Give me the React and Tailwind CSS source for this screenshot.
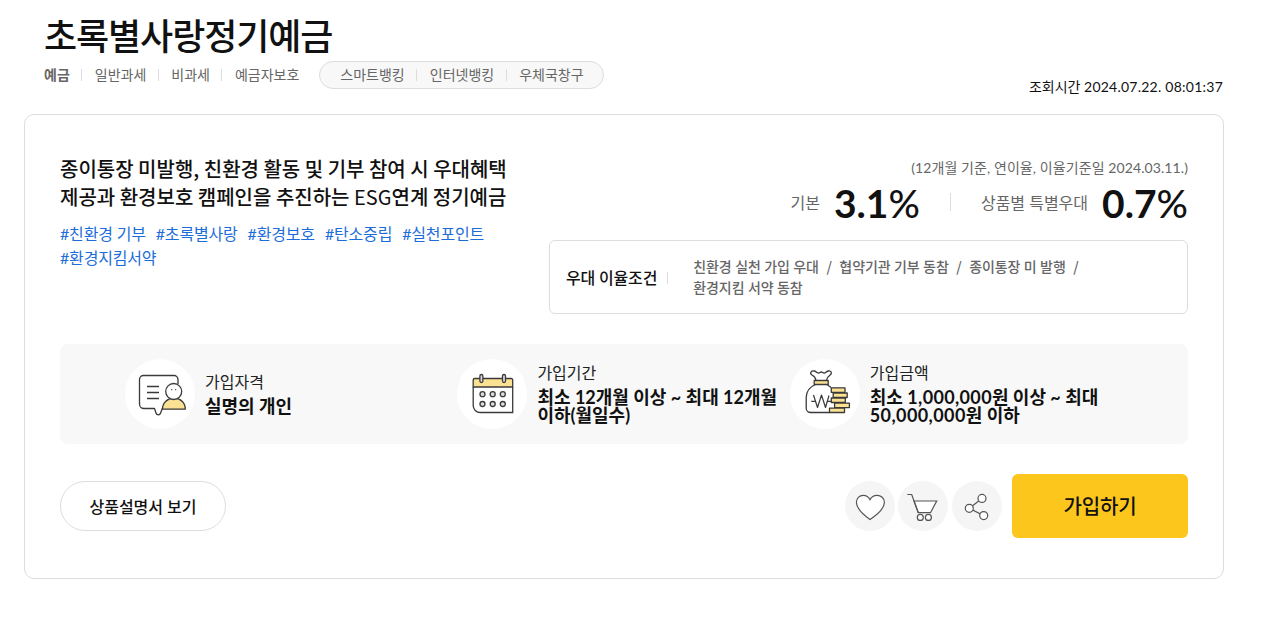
const tags = ['일반과세', '비과세', '예금자보호']
const channels = ['스마트뱅킹', '인터넷뱅킹', '우체국창구']
const hashtags = ['친환경 기부', '초록별사랑', '환경보호', '탄소중립', '실천포인트', '환경지킴서약']

function Bar({ className = 'h-3 ml-[11.5px] mr-[12.5px]' }) {
  return <span className={`w-px shrink-0 bg-[#ddd] ${className}`} />
}

function Slash() {
  return <span className="mx-[7.5px] font-['Noto_Sans_CJK_KR',sans-serif]">/</span>
}

function Rate({ children }) {
  return (
    <strong className="ml-3.5 pb-0.5 text-[39px] leading-[44px] font-bold text-[#111]">
      {children}<span className="font-medium">%</span>
    </strong>
  )
}

function MemberIcon() {
  return (
    <svg className="w-[70px] h-[70px]" viewBox="0 0 70 70" fill="none" stroke="#3a3a3a" strokeWidth={1.3} strokeLinejoin="round">
      <path d="M53 25V20.5a4 4 0 0 0-4-4H18.5a4 4 0 0 0-4 4v24.500a4.500 4.500 0 0 0 4.500 4.500h10.500l1.500 4.500c.8 2.400 3.800 2.400 4.600 0l1.900-5" />
      <path d="M22 27.500h12M22 33.500h12M22 39.500h12" />
      <path d="M37.500 50.200c0-6.500 5-11 11.500-11s11.300 4.500 11.300 11z" fill="#fbe192" />
      <circle cx="48.700" cy="32.500" r="8" fill="#fff" />
      <path d="M46.200 30.700h1M50.200 30.700h1" />
    </svg>
  )
}

function CalendarIcon() {
  return (
    <svg className="w-[70px] h-[70px]" viewBox="0 0 70 70" fill="none" stroke="#3a3a3a" strokeWidth={1.3}>
      <path d="M16.200 28V21a1.500 1.500 0 0 1 1.500-1.500h36.500a1.500 1.500 0 0 1 1.500 1.500v7z" fill="#fbe192" />
      <path d="M16.200 28v18.500a7 7 0 0 0 7 7h32.500V28" />
      <g fill="#ddd">
        <rect x="22.900" y="15.500" width="3" height="8" rx="1.500" />
        <rect x="45.500" y="15.500" width="3" height="8" rx="1.500" />
        <circle cx="25.500" cy="35.200" r="2.500" />
        <circle cx="35.700" cy="35.200" r="2.500" />
        <circle cx="45.800" cy="35.200" r="2.500" />
        <circle cx="25.500" cy="45" r="2.500" />
        <circle cx="35.700" cy="45" r="2.500" />
        <circle cx="45.800" cy="45" r="2.500" />
      </g>
    </svg>
  )
}

function MoneyIcon() {
  return (
    <svg className="w-[70px] h-[70px]" viewBox="0 0 70 70" fill="none" stroke="#3a3a3a" strokeWidth={1.3} strokeLinejoin="round">
      <path d="M26 21.300c-.5-2.800-2-4.300-4-5.300-3-1.800-.5-4.800 2.500-4 2 .5 2.500 2.200 4 2.200 1.200 0 1.600-1.200 2.800-1.200s1.600 1.200 2.800 1.200c1.500 0 2-1.700 4-2.200 3-.8 4.500 2.200 2 4-2 1.500-3.200 2.500-3.700 5.300" />
      <rect x="24.200" y="21.500" width="14" height="4" fill="#fbe192" />
      <path d="M25.500 25.500c-6 2.500-9.300 7-9.300 13v10.500a4.500 4.500 0 0 0 4.500 4.500H39.500M37 25.500l4 3" />
      <path d="M23.500 36l4 12.500 4-12.500 4 12.500 3.500-12M21.300 42.300h4.200M38 42.300h3" strokeWidth={1.200} />
      <g fill="#fbe192">
        <rect x="41.300" y="28.800" width="13.700" height="4.500" />
        <rect x="43.200" y="34" width="14" height="4.500" />
        <rect x="41.300" y="39" width="14" height="4.500" />
        <rect x="44.600" y="44.100" width="14.800" height="4.500" />
        <rect x="39.500" y="49.200" width="15" height="4.300" />
      </g>
    </svg>
  )
}

function InfoItem({ icon, label, children }) {
  return (
    <li className="flex items-center w-[332.4px]">
      <div className="w-[70px] h-[70px] rounded-full bg-white mr-2.5 shrink-0">{icon}</div>
      <div className="whitespace-nowrap pb-1">
        <p className="text-base leading-6 mb-[3px] text-[#222]">{label}</p>
        <p className="text-lg leading-[18px] font-bold">{children}</p>
      </div>
    </li>
  )
}

function RoundButton({ label, children }) {
  return (
    <button aria-label={label} className="w-[50px] h-[50px] rounded-full bg-[#f5f5f5]">
      <svg className="w-[50px] h-[50px]" viewBox="0 0 50 50" fill="#fff" stroke="#555" strokeWidth={1.2}>
        {children}
      </svg>
    </button>
  )
}

export default function App() {
  return (
    <main className="w-[1270px] h-[627px] bg-white text-[#111] overflow-hidden pl-6 font-['Lato','Noto_Sans_CJK_KR',sans-serif]">
      <header className="w-[1200px] h-[114px] pl-5 pr-px flex justify-between">
        <div className="pt-3">
          <h1 className="text-4xl leading-[48px] font-medium tracking-[-0.03em]">초록별사랑정기예금</h1>
          <div className="flex items-center h-7 mt-px text-sm text-[#666]">
            <strong className="font-bold">예금</strong>
            {tags.map((t) => (
              <span key={t} className="flex items-center"><Bar />{t}</span>
            ))}
            <div className="flex items-center h-7 ml-5 pl-5 pr-[19px] border border-[#ddd] rounded-full bg-[#f8f8f8]">
              {channels.map((c, i) => (
                <span key={c} className="flex items-center">{i > 0 && <Bar />}{c}</span>
              ))}
            </div>
          </div>
        </div>
        <p className="text-sm leading-5 pt-[77px]">조회시간 <span className="tracking-[0.24px]">2024.07.22. 08:01:37</span></p>
      </header>

      <section className="w-[1200px] h-[465px] border border-[#ddd] rounded-[10px] px-[35px] pt-[40px]">
        <div className="flex justify-between h-[189px]">
          <div className="whitespace-nowrap">
            <p className="text-xl leading-7 font-medium font-['Noto_Sans_CJK_KR',sans-serif]">
              종이통장 미발행, 친환경 활동 및 기부 참여 시 우대혜택<br />
              제공과 환경보호 캠페인을 추진하는 <span className="font-normal">ESG</span>연계 정기예금
            </p>
            <div className="w-[450px] flex flex-wrap gap-x-2.5 mt-[11px] text-base leading-6 tracking-[-0.011em] text-[#1c6dd9]">
              {hashtags.map((t) => (
                <span key={t}>#{t}</span>
              ))}
            </div>
          </div>
          <div className="w-[639px] whitespace-nowrap">
            <p className="text-sm leading-5 pt-[3px] text-right text-[#666] tracking-[0.09px]">(12개월 기준, 연이율, 이율기준일 2024.03.11.)</p>
            <div className="flex items-center justify-end h-[44px] mt-1 text-base text-[#666]">
              <span className="pb-0.5">기본</span>
              <Rate>3.1</Rate>
              <Bar className="h-[18px] mx-[30px] mb-1" />
              <span className="pb-0.5">상품별 특별우대</span>
              <Rate>0.7</Rate>
            </div>
            <dl className="flex items-center h-[74px] mt-[14px] pl-4 border border-[#ddd] rounded-md">
              <dt className="flex items-center pt-0.5 text-base font-medium tracking-[-0.01em]">
                우대 이율조건<Bar className="h-3 ml-[10px]" />
              </dt>
              <dd className="ml-[25px] text-sm leading-[21px] font-medium tracking-[-0.005em] text-[#666]">
                친환경 실천 가입 우대<Slash />협약기관 기부 동참<Slash />종이통장 미 발행<Slash /><br />
                환경지킴 서약 동참
              </dd>
            </dl>
          </div>
        </div>

        <ul className="flex h-[100px] pl-[65px] rounded-lg bg-[#f8f8f8]">
          <InfoItem icon={<MemberIcon />} label="가입자격">실명의 개인</InfoItem>
          <InfoItem icon={<CalendarIcon />} label="가입기간">최소 12개월 이상 ~ 최대 12개월<br />이하(월일수)</InfoItem>
          <InfoItem icon={<MoneyIcon />} label="가입금액">
            최소 <span className="tracking-[0.35px]">1,000,000</span>원 이상 ~ 최대<br />
            <span className="tracking-[0.4px]">50,000,000</span>원 이하
          </InfoItem>
        </ul>

        <div className="flex items-center justify-between h-16 mt-[30px]">
          <button className="w-[166px] h-[50px] pt-0.5 border border-[#ddd] rounded-full text-base font-medium">상품설명서 보기</button>
          <div className="flex items-center gap-[3.5px]">
            <RoundButton label="관심상품">
              <path d="M25 38.500C18 33.500 11.400 28 11.400 21.300c0-4 3-7 6.800-7 3 0 5.500 1.700 6.800 4.400 1.300-2.700 4-4.400 7-4.400 4 0 7.400 3 7.400 7C39.400 28 32.500 33.500 25 38.500z" />
            </RoundButton>
            <RoundButton label="장바구니">
              <path d="M16 20h22.700l-6.200 11.700H20.300z" />
              <path d="M9.300 13.500h4.400l6.600 18.200" fill="none" />
              <circle cx="22.300" cy="36.400" r="3" />
              <circle cx="30.400" cy="36.400" r="3" />
            </RoundButton>
            <RoundButton label="공유하기">
              <path d="M17.300 27.300L30 17.500M17.300 27.300l14.300 7.300" />
              <circle cx="30" cy="17.400" r="4" />
              <circle cx="17.300" cy="27.300" r="4" />
              <circle cx="31.700" cy="34.600" r="4" />
            </RoundButton>
            <button className="w-[176px] h-16 ml-[7px] rounded-md bg-[#fdc61c] text-xl font-medium tracking-[-0.01em]">가입하기</button>
          </div>
        </div>
      </section>
    </main>
  )
}
